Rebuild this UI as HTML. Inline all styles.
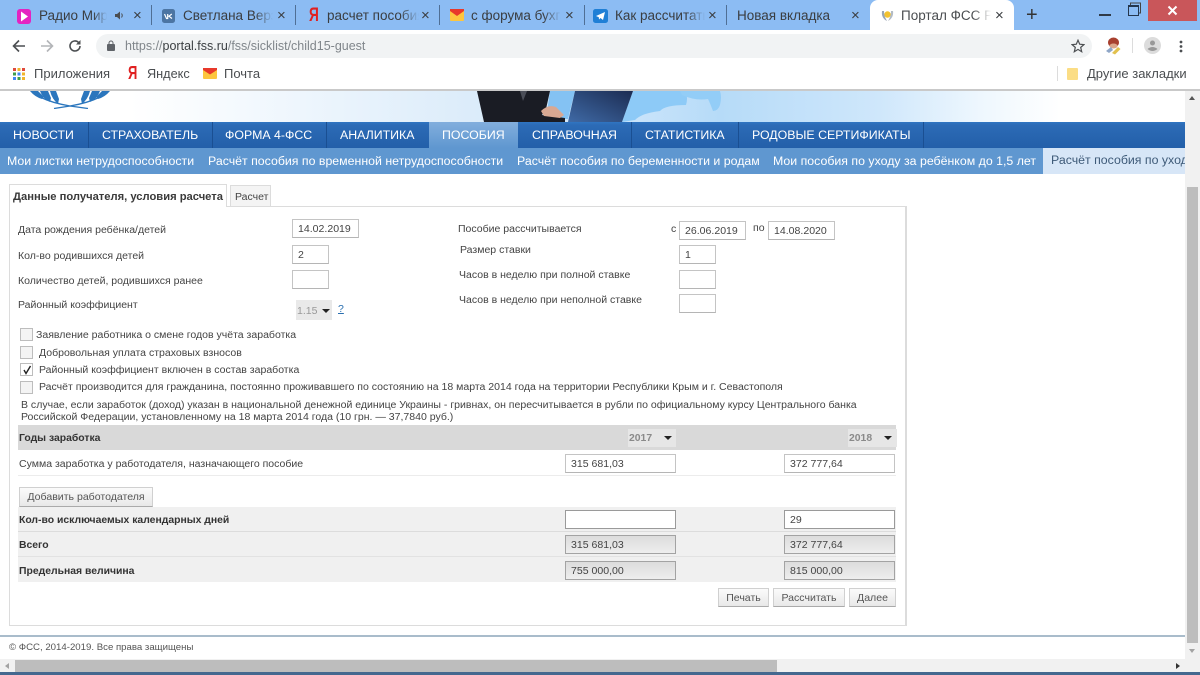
<!DOCTYPE html>
<html lang="ru"><head><meta charset="utf-8"><title>Портал ФСС</title>
<style>
html,body{margin:0;padding:0;width:1200px;height:675px;overflow:hidden;background:#fff;font-family:"Liberation Sans",sans-serif}
#r{position:relative;width:1200px;height:675px;overflow:hidden}
#r div,#r span.a,#r svg{position:absolute}
.tt{font-size:13.5px;color:#3a3d40;top:7px;height:17px;line-height:17px;white-space:nowrap;overflow:hidden}
.fade{-webkit-mask-image:linear-gradient(90deg,#000 80%,transparent);mask-image:linear-gradient(90deg,#000 80%,transparent)}
.x{font-size:15px;color:#3a3d40;top:7px;line-height:17px}
.sep{width:1px;height:20px;top:5px;background:#4f6f95}
.bm{font-size:13px;color:#4a4d50;top:66px;line-height:16px;white-space:nowrap}
.ya{color:#e02020;font-size:18px;font-weight:bold;line-height:21px;transform:scaleX(.72);transform-origin:0 0}
.n{top:122px;height:26px;line-height:27px;color:#fff;font-size:12.35px;white-space:nowrap}
.ns{top:122px;width:1px;height:26px;background:#1a4f92}
.s{top:152px;line-height:18px;color:#fff;font-size:12.35px;white-space:nowrap}
.l{font-size:10.53px;line-height:14px;color:#444;white-space:nowrap;margin-top:2px}
.b{font-weight:bold;color:#333;font-size:10.4px;margin-top:1px}
.i{box-sizing:border-box;border:1px solid #c4c4c4;border-bottom-color:#b5b5b5;background:#fff;font-size:10.55px;line-height:19px;color:#444;padding-left:5px;height:19px}
.g{background:linear-gradient(#dcdcdc,#eeeeee);border-color:#a3a3a3}
.d{border-color:#9a9a9a}
.c{box-sizing:border-box;left:20px;width:13px;height:13px;border:1px solid #bdbdbd;background:#f4f4f4}
.btn{box-sizing:border-box;top:588px;height:19px;border:1px solid #d0d0d0;border-bottom-color:#aaa;background:linear-gradient(#fbfbfb,#e8e8e8);text-align:center;font-size:10.55px;line-height:19px;color:#555}
.sel{background:#e6e6e6;height:18px;top:429px;font-size:10.4px;font-weight:bold;color:#8a8a8a;line-height:20px}
.ar{width:0;height:0;border-left:4px solid transparent;border-right:4px solid transparent;border-top:4px solid #222}
</style></head><body><div id="r">

<!-- Tab strip -->
<div style="left:0;top:0;width:1200px;height:30px;background:#8cbcf3"></div>
<svg style="left:17px;top:9px" width="14" height="15" viewBox="0 0 14 15"><rect width="14" height="15" rx="3" fill="#e423c1"/><path d="M4 2.5L11 7.5L4 12.5Z" fill="#fff"/></svg>
<div class="tt fade" style="left:39px;width:68px">Радио Мир</div>
<svg style="left:114px;top:10px" width="11" height="11" viewBox="0 0 11 11"><path d="M1 4H3L6 1.5V9.5L3 7H1Z" fill="#4a4d50"/><path d="M7.5 3.5Q9 5.5 7.5 7.5" stroke="#4a4d50" fill="none"/></svg>
<div class="x" style="left:133px">×</div><div class="sep" style="left:151px"></div>
<svg style="left:162px;top:9px" width="13" height="14" viewBox="0 0 13 14"><rect width="13" height="14" rx="2.5" fill="#4c75a3"/><path d="M2.5 5L4.5 9.5H5.7V5M9.8 5L7 7.2L10 9.5M6 7.2H7" stroke="#fff" stroke-width="1.2" fill="none"/></svg>
<div class="tt fade" style="left:183px;width:90px">Светлана Верзакова</div>
<div class="x" style="left:277px">×</div><div class="sep" style="left:295px"></div>
<div class="ya" style="left:309px;top:5px;font-size:19px;line-height:22px">Я</div>
<div class="tt fade" style="left:327px;width:92px">расчет пособия</div>
<div class="x" style="left:421px">×</div><div class="sep" style="left:439px"></div>
<svg style="left:450px;top:9px" width="14" height="12" viewBox="0 0 14 12"><rect width="14" height="12" rx="1" fill="#fdc63f"/><path d="M0 0H14V2L7 7L0 2Z" fill="#e8392b"/></svg>
<div class="tt fade" style="left:471px;width:90px">с форума бухгалтеров</div>
<div class="x" style="left:565px">×</div><div class="sep" style="left:584px"></div>
<svg style="left:593px;top:9px" width="15" height="14" viewBox="0 0 15 14"><rect width="15" height="14" rx="2.5" fill="#1f7fd6"/><path d="M3 7L12 3L10 11L7.5 9L6 10.5L5.8 8.3Z" fill="#fff"/></svg>
<div class="tt fade" style="left:615px;width:90px">Как рассчитать пособие</div>
<div class="x" style="left:708px">×</div><div class="sep" style="left:726px"></div>
<div class="tt" style="left:737px;width:100px">Новая вкладка</div>
<div class="x" style="left:851px">×</div>
<div style="left:870px;top:0;width:144px;height:30px;background:#fff;border-radius:8px 8px 0 0"></div>
<svg style="left:880px;top:8px" width="15" height="15" viewBox="0 0 15 15"><path d="M2 3Q1 10 7 13Q4 8 4 3Z" fill="#9aa7b5"/><path d="M13 3Q14 10 8 13Q11 8 11 3Z" fill="#b3bcc6"/><circle cx="7.5" cy="6.5" r="3.2" fill="#f2c230"/></svg>
<div class="tt fade" style="left:901px;width:90px;color:#4a4d50">Портал ФСС РФ</div>
<div class="x" style="left:995px">×</div>
<div style="left:1026px;top:4px;font-size:20px;line-height:22px;color:#333">+</div>
<div style="left:1099px;top:14px;width:12px;height:2px;background:#2f3a48"></div>
<svg style="left:1127px;top:2px" width="15" height="15" viewBox="0 0 15 15"><path d="M3.5 3V1H13.5V11H11.5" stroke="#444" fill="none"/><rect x="1.5" y="3.5" width="10" height="10" stroke="#24364d" fill="none"/><rect x="1.5" y="3" width="10" height="2" fill="#24364d"/></svg>
<div style="left:1148px;top:0;width:49px;height:21px;background:#c9565a"></div>
<svg style="left:1167px;top:5px" width="11" height="11" viewBox="0 0 11 11"><path d="M1.5 1.5L9.5 9.5M9.5 1.5L1.5 9.5" stroke="#fff" stroke-width="2"/></svg>

<!-- Toolbar -->
<div style="left:0;top:30px;width:1200px;height:60px;background:#fff"></div>
<svg style="left:12px;top:39px" width="14" height="14" viewBox="0 0 14 14"><path d="M13 7H2M7 1.5L1.5 7L7 12.5" stroke="#4c4f52" stroke-width="1.6" fill="none"/></svg>
<svg style="left:40px;top:39px" width="14" height="14" viewBox="0 0 14 14"><path d="M1 7H12M7 1.5L12.5 7L7 12.5" stroke="#b3b5b8" stroke-width="1.6" fill="none"/></svg>
<svg style="left:68px;top:39px" width="14" height="14" viewBox="0 0 14 14"><path d="M12 7A5 5 0 1 1 10.5 3.4" stroke="#4c4f52" stroke-width="1.6" fill="none"/><path d="M12.5 1V5.5H8Z" fill="#4c4f52"/></svg>
<div style="left:96px;top:34px;width:996px;height:24px;border-radius:12px;background:#f1f3f4"></div>
<svg style="left:107px;top:40px" width="8" height="11" viewBox="0 0 8 11"><rect y="4" width="8" height="7" rx="1" fill="#5f6368"/><path d="M2 4.500V3A2 2 0 0 1 6 3V4.500" stroke="#5f6368" fill="none"/></svg>
<div style="left:125px;top:38px;font-size:12.5px;line-height:16px;color:#80868b;white-space:nowrap">https://<span style="color:#3c4043">portal.fss.ru</span>/fss/sicklist/child15-guest</div>
<svg style="left:1071px;top:39px" width="14" height="14" viewBox="0 0 14 14"><path d="M7 1.200L8.700 5.200L13 5.600L9.700 8.400L10.700 12.700L7 10.400L3.300 12.700L4.300 8.400L1 5.600L5.300 5.200Z" stroke="#4c4f52" stroke-width="1.200" fill="none"/></svg>
<svg style="left:1105px;top:37px" width="16" height="18" viewBox="0 0 16 18"><ellipse cx="8.500" cy="5.500" rx="5.500" ry="5" fill="#a8402f"/><ellipse cx="8.500" cy="9" rx="4" ry="2.500" fill="#dba68a"/><path d="M1 14L6 10L8 13L4 16Z" fill="#8fa6c7"/><path d="M7 16L13 10L15.500 12L10 17.500Z" fill="#e2c14e"/></svg>
<div style="left:1132px;top:38px;width:1px;height:15px;background:#dcdcdc"></div>
<svg style="left:1144px;top:37px" width="17" height="17" viewBox="0 0 17 17"><circle cx="8.500" cy="8.500" r="8.500" fill="#dcdcdc"/><circle cx="8.500" cy="6" r="2.500" fill="#999"/><path d="M3.500 12Q8.500 8 13.500 12Q8.500 16 3.500 12Z" fill="#999"/></svg>
<svg style="left:1179px;top:40px" width="4" height="13" viewBox="0 0 4 13"><circle cx="2" cy="2" r="1.400" fill="#4c4f52"/><circle cx="2" cy="6.500" r="1.400" fill="#4c4f52"/><circle cx="2" cy="11" r="1.400" fill="#4c4f52"/></svg>

<!-- Bookmarks -->
<svg style="left:13px;top:68px" width="12" height="12" viewBox="0 0 12 12"><g><rect x="0" y="0" width="3" height="3" fill="#e04a3c"/><rect x="4.500" y="0" width="3" height="3" fill="#f0b52b"/><rect x="9" y="0" width="3" height="3" fill="#e04a3c"/><rect x="0" y="4.500" width="3" height="3" fill="#3f9c4b"/><rect x="4.500" y="4.500" width="3" height="3" fill="#4285f4"/><rect x="9" y="4.500" width="3" height="3" fill="#f0b52b"/><rect x="0" y="9" width="3" height="3" fill="#4285f4"/><rect x="4.500" y="9" width="3" height="3" fill="#3f9c4b"/><rect x="9" y="9" width="3" height="3" fill="#f0b52b"/></g></svg>
<div class="bm" style="left:34px">Приложения</div>
<div class="ya" style="left:128px;top:63px">Я</div>
<div class="bm" style="left:147px;font-size:12.7px">Яндекс</div>
<svg style="left:203px;top:68px" width="14" height="11" viewBox="0 0 14 11"><rect width="14" height="11" rx="1" fill="#fdc63f"/><path d="M0 0H14V2L7 6.500L0 2Z" fill="#e8392b"/></svg>
<div class="bm" style="left:224px">Почта</div>
<div style="left:1057px;top:66px;width:1px;height:15px;background:#dcdcdc"></div>
<div style="left:1067px;top:68px;width:11px;height:12px;background:#fbdd85;border-radius:1px"></div>
<div class="bm" style="left:1087px;width:100px;overflow:hidden">Другие закладки</div>
<div style="left:0;top:89px;width:1200px;height:2px;background:#c9c9c9"></div>

<!-- Banner -->
<div style="left:0;top:91px;width:1185px;height:31px;background:linear-gradient(90deg,#fff 0,#fff 130px,#eef6fd 300px,#dcecfa 470px,#c8e3fa 640px,#b6dbf8 720px,#cfe7fb 880px,#eef7fe 980px,#fff 1060px)"></div>
<svg style="left:30px;top:91px" width="82" height="18" viewBox="0 0 82 18"><g fill="#2b76bd"><path d="M0 0H8L14 6L12 8Q5 6 0 0Z"/><path d="M10 0H18L21 7L20 11Q13 8 10 0Z"/><path d="M20 0H26L29 8L28 13Q22 8 20 0Z"/><path d="M80 0H72L66 6L68 8Q75 6 80 0Z"/><path d="M70 0H62L59 7L60 11Q67 8 70 0Z"/><path d="M60 0H54L51 8L52 13Q58 8 60 0Z"/></g><path d="M10 6Q22 12 40 15L58 17.500M70 6Q58 12 40 15L24 17.500" stroke="#2b76bd" stroke-width="1.300" fill="none"/></svg>
<svg style="left:470px;top:91px" width="270" height="31" viewBox="0 0 270 31">
<defs><linearGradient id="lap" x1="1" y1="0" x2="0" y2="1"><stop offset="0" stop-color="#1c2c52"/><stop offset="1" stop-color="#3f6aa6"/></linearGradient></defs>
<path d="M80 0H105L98 28H76Z" fill="#84c2f3"/>
<path d="M163 0H216Q218 8 216 14Q195 14 190 20Q172 22 165 29L152 31Z" fill="#8dcaf7"/>
<path d="M210 0H250Q252 6 250 14Q248 20 243 20Q240 12 238 8Q225 10 212 4Z" fill="#93cdf7"/>
<path d="M7 0H80L76 18L72 24L95 27V31H14Z" fill="#1a1c24"/>
<path d="M50 0L53 10L57 0Z" fill="#4a4d57"/>
<path d="M71 20Q78 13 86 16L94 24L90 27L74 25Z" fill="#d8a893"/>
<path d="M105 0H163L152 31H98Z" fill="url(#lap)"/>
</svg>

<!-- Nav -->
<div style="left:0;top:122px;width:1185px;height:26px;background:linear-gradient(#3075c2 0,#2c6bb6 3px,#235fa9)"></div>
<div class="n" style="left:13px">НОВОСТИ</div>
<div class="ns" style="left:88px"></div>
<div class="n" style="left:102px">СТРАХОВАТЕЛЬ</div>
<div class="ns" style="left:212px"></div>
<div class="n" style="left:225px">ФОРМА 4-ФСС</div>
<div class="ns" style="left:326px"></div>
<div class="n" style="left:340px">АНАЛИТИКА</div>
<div style="left:429px;top:122px;width:89px;height:26px;background:linear-gradient(#82aedd,#5f97d0)"></div>
<div class="n" style="left:442px">ПОСОБИЯ</div>
<div class="ns" style="left:631px"></div>
<div class="n" style="left:532px">СПРАВОЧНАЯ</div>
<div class="ns" style="left:738px"></div>
<div class="n" style="left:645px">СТАТИСТИКА</div>
<div class="n" style="left:752px">РОДОВЫЕ СЕРТИФИКАТЫ</div>
<div class="ns" style="left:923px"></div>

<!-- Subnav -->
<div style="left:0;top:148px;width:1185px;height:26px;background:#5f97d0"></div>
<div class="s" style="left:7px">Мои листки нетрудоспособности</div>
<div class="s" style="left:208px">Расчёт пособия по временной нетрудоспособности</div>
<div class="s" style="left:517px">Расчёт пособия по беременности и родам</div>
<div class="s" style="left:773px">Мои пособия по уходу за ребёнком до 1,5 лет</div>
<div style="left:1043px;top:148px;width:142px;height:26px;background:#d7e6f7"></div>
<div class="s" style="left:1051px;width:134px;overflow:hidden;color:#3e5a78;top:151px">Расчёт пособия по уходу за ребёнком</div>

<!-- Scrollbars -->
<div style="left:1185px;top:91px;width:15px;height:568px;background:#f1f1f1"></div>
<div style="left:1186px;top:96px;width:0;height:0;border-left:3px solid transparent;border-right:3px solid transparent;border-bottom:4px solid #555;margin-left:3px"></div>
<div style="left:1187px;top:187px;width:11px;height:456px;background:#bdbdbd"></div>
<div style="left:1189px;top:649px;width:0;height:0;border-left:3px solid transparent;border-right:3px solid transparent;border-top:4px solid #a3a3a3"></div>
<div style="left:0;top:659px;width:1185px;height:13px;background:#f1f1f1"></div>
<div style="left:15px;top:660px;width:762px;height:12px;background:#bdbdbd"></div>
<div style="left:5px;top:663px;width:0;height:0;border-top:3px solid transparent;border-bottom:3px solid transparent;border-right:4px solid #a3a3a3"></div>
<div style="left:1176px;top:663px;width:0;height:0;border-top:3px solid transparent;border-bottom:3px solid transparent;border-left:4px solid #333"></div>
<div style="left:1185px;top:659px;width:15px;height:13px;background:#f1f1f1"></div>
<div style="left:0;top:672px;width:1200px;height:3px;background:#44688f"></div>

<!-- Panel -->
<div style="box-sizing:border-box;left:9px;top:206px;width:898px;height:420px;border:1px solid #dcdcdc;border-width:1px 2px 1px 1px;background:#fff"></div>
<div style="box-sizing:border-box;left:9px;top:184px;width:218px;height:23px;background:#fff;border:1px solid #dcdcdc;border-bottom:0"></div>
<div style="left:13px;top:190px;font-size:11.2px;line-height:15px;font-weight:bold;white-space:nowrap;color:#3a3a3a">Данные получателя, условия расчета</div>
<div style="box-sizing:border-box;left:230px;top:185px;width:41px;height:21px;background:#f4f4f4;border:1px solid #dcdcdc;border-bottom:0"></div>
<div class="l" style="left:235px;top:188px">Расчет</div>

<!-- Left fields -->
<div class="l" style="left:18px;top:221px">Дата рождения ребёнка/детей</div>
<div class="i" style="left:292px;top:219px;width:67px">14.02.2019</div>
<div class="l" style="left:18px;top:247px">Кол-во родившихся детей</div>
<div class="i" style="left:292px;top:245px;width:37px">2</div>
<div class="l" style="left:18px;top:272px">Количество детей, родившихся ранее</div>
<div class="i" style="left:292px;top:270px;width:37px"></div>
<div class="l" style="left:18px;top:296px">Районный коэффициент</div>
<div style="left:296px;top:300px;width:36px;height:20px;background:#e9e9e9"></div>
<div class="l" style="left:297px;top:302px;color:#999">1.15</div>
<div class="ar" style="left:322px;top:309px"></div>
<div class="l" style="left:338px;top:300px;color:#2a6fb0;text-decoration:underline">?</div>

<!-- Right fields -->
<div class="l" style="left:458px;top:220px">Пособие рассчитывается</div>
<div class="l" style="left:671px;top:220px">с</div>
<div class="i" style="left:679px;top:221px;width:67px">26.06.2019</div>
<div class="l" style="left:753px;top:219px">по</div>
<div class="i" style="left:768px;top:221px;width:67px">14.08.2020</div>
<div class="l" style="left:460px;top:241px">Размер ставки</div>
<div class="i" style="left:679px;top:245px;width:37px">1</div>
<div class="l" style="left:459px;top:266px">Часов в неделю при полной ставке</div>
<div class="i" style="left:679px;top:270px;width:37px"></div>
<div class="l" style="left:459px;top:291px">Часов в неделю при неполной ставке</div>
<div class="i" style="left:679px;top:294px;width:37px"></div>

<!-- Checkboxes -->
<div class="c" style="top:328px"></div>
<div class="l" style="left:36px;top:326px">Заявление работника о смене годов учёта заработка</div>
<div class="c" style="top:346px"></div>
<div class="l" style="left:39px;top:344px">Добровольная уплата страховых взносов</div>
<div class="c" style="top:363px;background:#fff"></div>
<svg style="left:22px;top:365px" width="10" height="10" viewBox="0 0 10 10"><path d="M2 5L4 8.500L8.500 1" stroke="#222" stroke-width="1.400" fill="none"/></svg>
<div class="l" style="left:39px;top:361px">Районный коэффициент включен в состав заработка</div>
<div class="c" style="top:381px"></div>
<div class="l" style="left:39px;top:378px">Расчёт производится для гражданина, постоянно проживавшего по состоянию на 18 марта 2014 года на территории Республики Крым и г. Севастополя</div>
<div class="l" style="left:21px;top:396px">В случае, если заработок (доход) указан в национальной денежной единице Украины - гривнах, он пересчитывается в рубли по официальному курсу Центрального банка</div>
<div class="l" style="left:21px;top:408px">Российской Федерации, установленному на 18 марта 2014 года (10 грн. — 37,7840 руб.)</div>

<!-- Table -->
<div style="left:18px;top:425px;width:878px;height:25px;background:#d9d9d9"></div>
<div class="l b" style="left:19px;top:431px">Годы заработка</div>
<div class="sel" style="left:628px;width:47px;padding-left:1px">2017</div>
<div class="ar" style="left:664px;top:436px"></div>
<div class="sel" style="left:848px;width:48px;padding-left:1px">2018</div>
<div class="ar" style="left:884px;top:436px"></div>
<div class="l" style="left:19px;top:455px">Сумма заработка у работодателя, назначающего пособие</div>
<div class="i" style="left:565px;top:454px;width:111px">315 681,03</div>
<div class="i" style="left:784px;top:454px;width:111px">372 777,64</div>
<div style="left:18px;top:475px;width:878px;height:1px;background:#ececec"></div>
<div class="btn" style="left:19px;top:487px;width:134px;height:20px;line-height:19px">Добавить работодателя</div>
<div style="left:18px;top:507px;width:878px;height:75px;background:#f0f0f0"></div>
<div style="left:18px;top:531px;width:878px;height:1px;background:#dcdcdc"></div>
<div style="left:18px;top:556px;width:878px;height:1px;background:#e2e2e2"></div>
<div class="l b" style="left:19px;top:513px">Кол-во исключаемых календарных дней</div>
<div class="l b" style="left:19px;top:538px">Всего</div>
<div class="l b" style="left:19px;top:564px">Предельная величина</div>
<div class="i d" style="left:565px;top:510px;width:111px"></div>
<div class="i d" style="left:784px;top:510px;width:111px">29</div>
<div class="i g" style="left:565px;top:535px;width:111px">315 681,03</div>
<div class="i g" style="left:784px;top:535px;width:111px">372 777,64</div>
<div class="i g" style="left:565px;top:561px;width:111px">755 000,00</div>
<div class="i g" style="left:784px;top:561px;width:111px">815 000,00</div>
<div class="btn" style="left:718px;width:51px">Печать</div>
<div class="btn" style="left:773px;width:72px">Рассчитать</div>
<div class="btn" style="left:849px;width:47px">Далее</div>

<!-- Footer -->
<div style="left:0;top:635px;width:1185px;height:2px;background:#a9bccb"></div>
<div class="l" style="left:9px;top:639px;font-size:9.65px;color:#555">© ФСС, 2014-2019. Все права защищены</div>
</div></body></html>
